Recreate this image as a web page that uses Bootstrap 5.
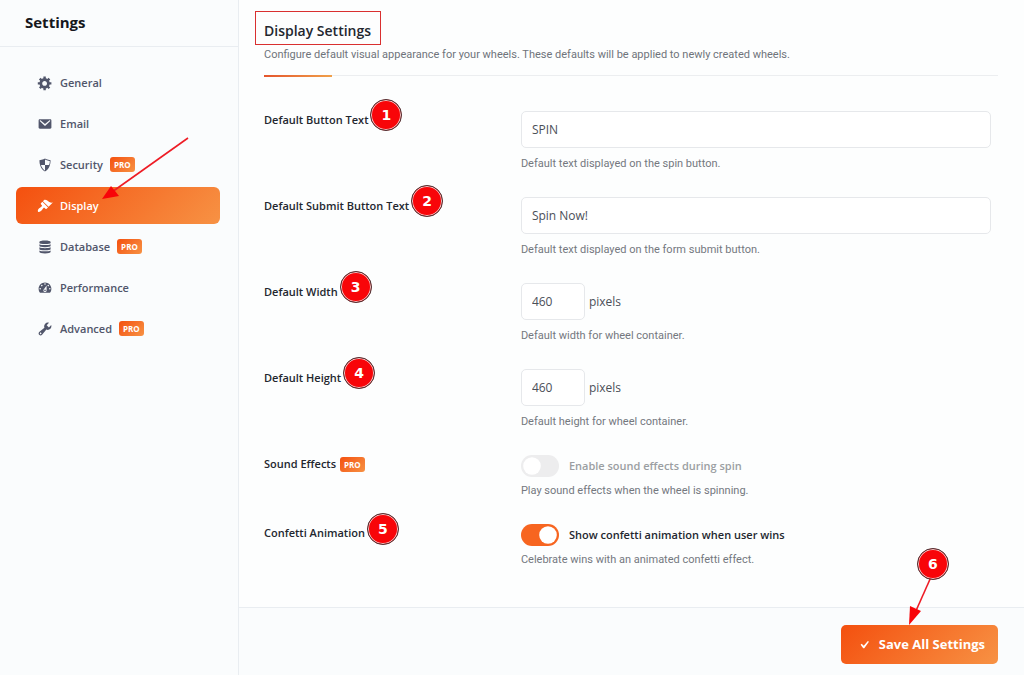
<!DOCTYPE html>
<html lang="en">
<head>
<meta charset="utf-8">
<meta name="viewport" content="width=device-width, initial-scale=1">
<title>Settings</title>
<link href="https://cdn.jsdelivr.net/npm/bootstrap@5.3.0/dist/css/bootstrap.min.css" rel="stylesheet">
<style>
:root { --brand: linear-gradient(135deg, #f4500f 0%, #f79244 100%); }
body { font-family: "Open Sans", "Noto Sans", sans-serif; font-size: 12px; line-height: 18px; color: #4b4f58; background: #fdfefe; }
.side-pane { width: 239px; background: #fafcfd; border-right: 1px solid #e9edf1; }
.side-title { height: 47px; padding: 0 25px 2px; border-bottom: 1px solid #e9edf1; }
.side-title h1 { font-size: 15px; line-height: 22px; font-weight: 700; color: #15171c; }
.side-nav { padding: 17px 18px 18px 16px; gap: 4px; }
.side-nav .nav-link { height: 37px; padding: 0 21px; gap: 7px; color: #51566b; font-size: 11px; font-weight: 600; border-radius: 6px; }
.side-nav .nav-link.active { background: var(--brand); color: #fff; }
.side-nav svg.ico { width: 16px; height: 16px; fill: currentColor; }
.pro-tag { background: var(--brand); font-size: 8px; line-height: 15px; font-weight: 700; padding: 0 4px; border-radius: 3px; color: #fff; }
.content-body { padding: 20px 26px 13px 25px; }
.content-body h2 { font-size: 14px; line-height: 21px; font-weight: 600; color: #23272f; }
.lead-note { color: #6f747b; margin-top: 5px; }
.lead-note, .field-help { font-family: Roboto, "Open Sans", sans-serif; font-size: 11px; }
.section-rule { height: 2px; margin-top: 11px; background: linear-gradient(#eceef0, #eceef0) 0 0 / 100% 1px no-repeat; }
.section-rule span { display: block; width: 68px; height: 2px; background: linear-gradient(90deg, #e4552c, #f0a04a); }
.title-frame { position: absolute; inset: -9px -10px -4px -9px; border: 1px solid #d93030; }
.settings-form { padding-top: 34px; }
.setting-row { display: grid; grid-template-columns: 35fr 65fr; }
.setting-label { color: #23272f; font-size: 11px; font-weight: 600; }
.setting-field { padding-right: 7px; }
.setting-row.tall { min-height: 86px; }
.setting-row.short { min-height: 69px; }
.setting-field .form-control { height: 37px; font-size: 12px; padding: 0 10px; border-color: #e6e8eb; border-radius: 5px; color: #4b4f58; background: #fff; }
.setting-field .size-input { width: 64px; }
.field-help { margin-top: 7px; color: #74787e; }
.short .field-help { margin-top: 5px; }
.form-switch.toggle { padding: 0; min-height: 22px; gap: 10px; }
.form-switch.toggle .form-check-input { width: 38px; height: 22px; margin: 0; float: none; border: 0; background-color: #ededee; --bs-form-switch-bg: url("data:image/svg+xml,%3csvg xmlns='http://www.w3.org/2000/svg' viewBox='-4 -4 8 8'%3e%3ccircle r='3.2' fill='%23fff'/%3e%3c/svg%3e"); background-image: var(--bs-form-switch-bg); opacity: 1; }
.form-switch.toggle .form-check-input:checked { background-color: #f76520; }
.form-switch.toggle .form-check-label { font-size: 11px; font-weight: 600; color: #23272f; opacity: 1; }
.form-switch.toggle .form-check-input:disabled ~ .form-check-label { color: #9b9ea2; opacity: 1; }
.content-foot { background: #fafcfd; border-top: 1px solid #e9edf1; padding: 17px 26px 11px; }
.save-btn { height: 39px; padding: 0 13px 0 15px; gap: 7px; font-size: 13px; font-weight: 700; color: #fff; background: var(--brand); border: 0; border-radius: 5px; }
.save-btn svg { width: 16px; height: 16px; fill: currentColor; }
/* numbered callouts and arrows lie over the form */
.callout-dot { position: absolute; left: calc(100% + 2px); top: -12px; width: 32px; height: 32px; border-radius: 50%; background: #f80509; border: 1px solid #4a3436; box-shadow: inset 0 0 0 1px #f9c9c9; color: #fff; font: 700 14px/30px "DejaVu Sans", sans-serif; text-align: center; }
.callout-arrow { position: absolute; overflow: visible; pointer-events: none; stroke: #ee1c25; fill: #f80509; }
.arrow-nav { left: 86px; top: -49px; width: 86px; height: 61px; }
.arrow-save { left: 69px; top: -48px; width: 22px; height: 48px; }
.save-wrap .callout-dot { left: 76px; top: -77px; }
</style>
</head>
<body>
<div class="d-flex min-vh-100">
  <aside class="side-pane flex-shrink-0">
    <div class="side-title d-flex align-items-center"><h1 class="m-0">Settings</h1></div>
    <nav class="side-nav nav flex-column" aria-label="Settings sections">
      <a class="nav-link d-flex align-items-center" href="#general"><svg class="ico" viewBox="0 0 20 20"><path d="M18 12h-2.18c-.17.7-.44 1.35-.81 1.93l1.54 1.54-2.1 2.1-1.54-1.54c-.58.36-1.23.63-1.91.79V19H8v-2.18c-.68-.16-1.33-.43-1.91-.79l-1.54 1.54-2.12-2.12 1.54-1.54c-.36-.58-.63-1.23-.79-1.91H1V9.03h2.17c.16-.7.44-1.35.8-1.94L2.43 5.55l2.1-2.1 1.54 1.54c.58-.37 1.24-.64 1.93-.81V2h3v2.18c.68.16 1.33.43 1.91.79l1.54-1.54 2.12 2.12-1.54 1.54c.36.59.64 1.24.8 1.94H18V12zm-8.5 1.5c1.66 0 3-1.34 3-3s-1.34-3-3-3-3 1.34-3 3 1.34 3 3 3z"/></svg>General</a>
      <a class="nav-link d-flex align-items-center" href="#email"><svg class="ico" viewBox="0 0 20 20"><path d="M3.5 4h13c.8 0 1.5.7 1.5 1.500v9c0 .8-.7 1.500-1.500 1.500h-13c-.8 0-1.500-.7-1.500-1.500v-9C2 4.700 2.700 4 3.500 4zM3.600 5.500c-.4.4-.2.9.1 1.200L10 12.500l6.300-5.800c.3-.3.5-.8.1-1.200s-.8-.2-1.100.1L10 9.900 4.700 5.600c-.3-.3-.7-.5-1.100-.1z" fill-rule="evenodd"/></svg>Email</a>
      <a class="nav-link d-flex align-items-center" href="#security"><svg class="ico" viewBox="0 0 20 20"><path d="M10 2s3 2 7 2c0 11-7 14-7 14S3 15 3 4c4 0 7-2 7-2zm0 8h5s1-1 1-5c0 0-5-1-6-2v7H5c1 4 5 7 5 7v-7z"/></svg>Security<span class="pro-tag">PRO</span></a>
      <a class="nav-link active d-flex align-items-center position-relative" href="#display" aria-current="page"><svg class="ico" viewBox="0 0 20 20"><path d="M14.480 11.060L7.410 3.990l1.500-1.500c.5-.56 2.300-.47 3.510.32 1.210.8 1.430 1.280 2.910 2.100 1.180.64 2.450 1.260 4.450.85zm-.71.71L6.700 4.700 4.930 6.470c-.39.39-.39 1.020 0 1.410l1.060 1.060c.39.39.39 1.030 0 1.420-.6.6-1.430 1.110-2.210 1.690-.35.26-.7.53-1.010.84C1.430 14.230.4 16.080 1.400 17.070c.99 1 2.840-.03 4.180-1.360.31-.31.58-.66.85-1.020.57-.78 1.080-1.610 1.690-2.210.39-.39 1.020-.39 1.410 0l1.060 1.060c.39.39 1.020.39 1.410 0z"/></svg>Display<svg class="callout-arrow arrow-nav" viewBox="0 0 86 61"><path d="M86 0L10 54" stroke-width="1.600"/><path d="M0 61L9 48L17 58z" stroke="none"/></svg></a>
      <a class="nav-link d-flex align-items-center" href="#database"><svg class="ico" viewBox="0 0 20 20"><path d="M10 2c4 0 7 .7 7 1.700v1.200c0 .9-3 1.500-7 1.500s-7-.6-7-1.500V3.700C3 2.700 6 2 10 2zM3 6.500c1.500.8 4 1.100 7 1.100s5.500-.3 7-1.100v2.300c0 .9-3 1.500-7 1.500s-7-.6-7-1.500zM3 10.400c1.500.8 4 1.100 7 1.100s5.500-.3 7-1.100v2.300c0 .9-3 1.500-7 1.500s-7-.6-7-1.500zM3 14.300c1.500.8 4 1.100 7 1.100s5.500-.3 7-1.100v2c0 1-3 1.700-7 1.700s-7-.7-7-1.700z"/></svg>Database<span class="pro-tag">PRO</span></a>
      <a class="nav-link d-flex align-items-center" href="#performance"><svg class="ico" viewBox="0 0 20 20"><path d="M3.760 16h12.480c1.100-1.370 1.760-3.110 1.760-5 0-4.420-3.580-8-8-8s-8 3.580-8 8c0 1.890.66 3.630 1.760 5zM10 4c.55 0 1 .45 1 1s-.45 1-1 1-1-.45-1-1 .45-1 1-1zM6 6c.55 0 1 .45 1 1s-.45 1-1 1-1-.45-1-1 .45-1 1-1zm8 0c.55 0 1 .45 1 1s-.45 1-1 1-1-.45-1-1 .45-1 1-1zm-5.370 5.550L12 7v6c0 1.100-.9 2-2 2s-2-.9-2-2c0-.57.24-1.080.63-1.450zM4 10c.55 0 1 .45 1 1s-.45 1-1 1-1-.45-1-1 .45-1 1-1zm12 0c.55 0 1 .45 1 1s-.45 1-1 1-1-.45-1-1 .45-1 1-1zm-5 3c0-.55-.45-1-1-1s-1 .45-1 1 .45 1 1 1 1-.45 1-1z" fill-rule="evenodd"/></svg>Performance</a>
      <a class="nav-link d-flex align-items-center" href="#advanced"><svg class="ico" viewBox="0 0 20 20"><path d="M16.680 9.770c-1.340 1.340-3.300 1.670-4.950.99l-5.410 6.520c-.99.99-2.590.99-3.580 0s-.99-2.590 0-3.570l6.520-5.420c-.68-1.650-.35-3.610.99-4.950 1.280-1.280 3.120-1.620 4.720-1.060l-2.890 2.890 2.820 2.820 2.860-2.870c.53 1.580.18 3.390-1.080 4.650zM3.810 16.210c.4.39 1.040.39 1.430 0 .4-.4.4-1.040 0-1.430-.39-.4-1.030-.4-1.430 0-.39.39-.39 1.030 0 1.430z"/></svg>Advanced<span class="pro-tag">PRO</span></a>
    </nav>
  </aside>

  <main class="flex-grow-1 d-flex flex-column">
    <div class="content-body flex-grow-1">
      <h2 class="m-0 d-inline-block position-relative align-top">Display Settings<span class="title-frame"></span></h2>
      <p class="lead-note mb-0">Configure default visual appearance for your wheels. These defaults will be applied to newly created wheels.</p>
      <div class="section-rule"><span></span></div>

      <form class="settings-form" id="display-form">
        <div class="setting-row tall">
          <div><label class="setting-label position-relative" for="btn-text">Default Button Text<span class="callout-dot">1</span></label></div>
          <div class="setting-field">
            <input class="form-control" type="text" id="btn-text" value="SPIN">
            <p class="field-help mb-0">Default text displayed on the spin button.</p>
          </div>
        </div>
        <div class="setting-row tall">
          <div><label class="setting-label position-relative" for="submit-text">Default Submit Button Text<span class="callout-dot">2</span></label></div>
          <div class="setting-field">
            <input class="form-control" type="text" id="submit-text" value="Spin Now!">
            <p class="field-help mb-0">Default text displayed on the form submit button.</p>
          </div>
        </div>
        <div class="setting-row tall">
          <div><label class="setting-label position-relative" for="wheel-width">Default Width<span class="callout-dot">3</span></label></div>
          <div class="setting-field">
            <div class="d-flex align-items-center gap-1"><input class="form-control size-input" type="text" inputmode="numeric" id="wheel-width" value="460"><span>pixels</span></div>
            <p class="field-help mb-0">Default width for wheel container.</p>
          </div>
        </div>
        <div class="setting-row tall">
          <div><label class="setting-label position-relative" for="wheel-height">Default Height<span class="callout-dot">4</span></label></div>
          <div class="setting-field">
            <div class="d-flex align-items-center gap-1"><input class="form-control size-input" type="text" inputmode="numeric" id="wheel-height" value="460"><span>pixels</span></div>
            <p class="field-help mb-0">Default height for wheel container.</p>
          </div>
        </div>
        <div class="setting-row short">
          <div class="d-flex align-items-center align-self-start gap-1"><span class="setting-label">Sound Effects</span><span class="pro-tag">PRO</span></div>
          <div class="setting-field">
            <div class="form-check form-switch toggle d-flex align-items-center mb-0"><input class="form-check-input" type="checkbox" role="switch" id="sound" disabled><label class="form-check-label" for="sound">Enable sound effects during spin</label></div>
            <p class="field-help mb-0">Play sound effects when the wheel is spinning.</p>
          </div>
        </div>
        <div class="setting-row short">
          <div><span class="setting-label position-relative">Confetti Animation<span class="callout-dot">5</span></span></div>
          <div class="setting-field">
            <div class="form-check form-switch toggle d-flex align-items-center mb-0"><input class="form-check-input" type="checkbox" role="switch" id="confetti" checked><label class="form-check-label" for="confetti">Show confetti animation when user wins</label></div>
            <p class="field-help mb-0">Celebrate wins with an animated confetti effect.</p>
          </div>
        </div>
      </form>
    </div>
    <div class="content-foot d-flex justify-content-end">
      <div class="save-wrap position-relative">
        <button class="btn save-btn d-flex align-items-center" type="submit" form="display-form"><svg viewBox="0 0 20 20"><path d="M14.830 4.890l1.340.94-5.810 8.380H9.020L5.780 9.670l1.340-1.250 2.570 2.400z"/></svg>Save All Settings</button>
        <svg class="callout-arrow arrow-save" viewBox="0 0 22 48"><path d="M21 0L5 36" stroke-width="1.600"/><path d="M-1 48L0 29L11 34z" stroke="none"/></svg>
        <span class="callout-dot">6</span>
      </div>
    </div>
  </main>
</div>
<script src="https://cdn.jsdelivr.net/npm/bootstrap@5.3.0/dist/js/bootstrap.bundle.min.js"></script>
</body>
</html>
